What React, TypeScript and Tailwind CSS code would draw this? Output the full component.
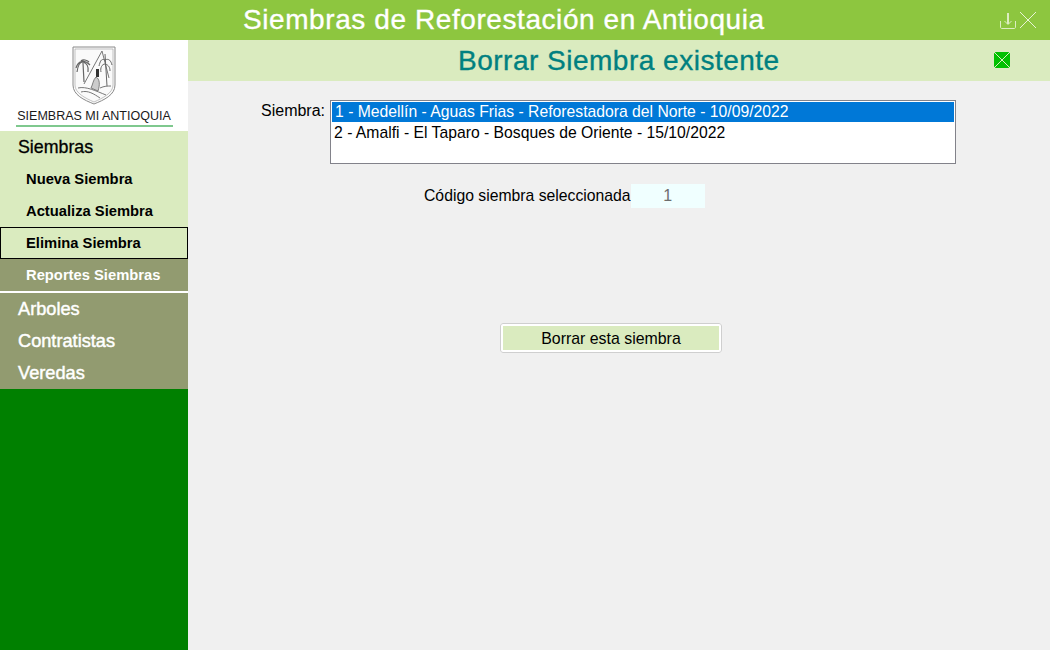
const subItems = [
  { label: "Nueva Siembra", active: false },
  { label: "Actualiza Siembra", active: false },
  { label: "Elimina Siembra", active: true },
]

const otherMenus = ["Arboles", "Contratistas", "Veredas"]

function Shield() {
  return (
    <svg width="44" height="59" viewBox="0 0 44 59" fill="none">
      <path d="M1 1H43V39C43 49 32 54 22 58C12 54 1 49 1 39Z" stroke="#8a8a8a" strokeWidth="1" fill="#fafafa" />
      <path d="M3 3H41V39C41 47 31 52 22 56C13 52 3 47 3 39Z" stroke="#aaa" strokeWidth="0.7" />
      <path d="M12 38L30 5L37 32" stroke="#777" strokeWidth="1" />
      <path d="M4 22C6 15 12 13 18 19M11 16C8 16 6 18 5 26M11 16C14 17 17 20 16 26M9 15C11 13 15 14 17 16M11 17L12 36" stroke="#666" strokeWidth="1.2" />
      <path d="M33 8L35 40M33 14C29 12 28 16 27 20M33 14C37 12 39 15 40 19M33 18C30 18 28 22 29 26M33 18C37 19 38 22 38 25" stroke="#666" strokeWidth="1" />
      <path d="M24 23H27V31H24Z" fill="#333" />
      <path d="M24 31C28 33 28 39 26 45L19 42C21 38 21 34 24 31Z" fill="#ccc" stroke="#666" strokeWidth="0.8" />
      <path d="M6 42C14 40 24 45 34 49M9 46C16 44 22 48 28 52M28 42C32 40 36 40 39 40" stroke="#777" strokeWidth="1" />
    </svg>
  )
}

function DownloadIcon() {
  return (
    <svg width="16" height="16" viewBox="0 0 16 16" fill="none" stroke="#dcedc1" strokeWidth="1">
      <path d="M0.5 8V14C0.5 15 1 15.5 2 15.5H14C15 15.5 15.5 15 15.5 14V8" />
      <path d="M8 0V11" strokeWidth="2" />
      <path d="M4.5 8L8 11.5L11.5 8" />
    </svg>
  )
}

function CrossIcon({ size, color }: { size: number; color: string }) {
  return (
    <svg width={size} height={size} viewBox={`0 0 ${size} ${size}`} stroke={color} strokeWidth="1" fill="none">
      <path d={`M0 0L${size} ${size}M${size} 0L0 ${size}`} />
    </svg>
  )
}

export default function App() {
  return (
    <div className="w-[1050px] h-[650px] flex flex-col overflow-hidden bg-[#f0f0f0] text-black font-['Liberation_Sans',Arial,sans-serif]">
      {/* Title bar */}
      <div className="relative h-10 shrink-0 bg-[#8dc63f] flex items-center pl-[243px]">
        <h1 className="text-[28px] font-normal text-white tracking-[0.58px] whitespace-nowrap [-webkit-text-stroke:0.35px_white]">Siembras de Reforestación en Antioquia</h1>
        <div className="absolute left-[1000px] top-[12px] flex items-start gap-1">
          <div className="mt-[1px]"><DownloadIcon /></div>
          <CrossIcon size={16} color="#e8f3d6" />
        </div>
      </div>

      <div className="flex flex-1 min-h-0">
        {/* Sidebar */}
        <aside className="w-[188px] shrink-0 flex flex-col bg-[#008000]">
          <div className="h-[91px] bg-white flex flex-col items-center pt-[6px]">
            <Shield />
            <div className="mt-[3px] text-[12.5px] leading-[16px] text-[#1a1a1a]">SIEMBRAS MI ANTIOQUIA</div>
            <div className="mt-[1px] w-[157px] h-[2px] bg-[#7fc88e]" />
          </div>

          <div className="bg-[#daebbf] flex flex-col text-black">
            <div className="h-8 pl-[18px] pt-[1px] flex items-center text-[17.8px] [-webkit-text-stroke:0.3px_black]">Siembras</div>
            {subItems.map((item) => (
              <div
                key={item.label}
                className={`h-8 pt-[1px] flex items-center text-[14.75px] font-bold ${item.active ? "pl-[25px] border border-black" : "pl-[26px]"}`}
              >
                {item.label}
              </div>
            ))}
          </div>

          <div className="h-8 pl-[26px] pt-[1px] flex items-center text-[14.75px] font-bold text-white bg-[#929b70]">Reportes Siembras</div>
          <div className="h-[2px] bg-white" />
          <div className="bg-[#929b70] flex flex-col text-white">
            {otherMenus.map((label) => (
              <div key={label} className="h-8 pl-[18px] pt-[1px] flex items-center text-[18.2px] [-webkit-text-stroke:0.45px_white]">
                {label}
              </div>
            ))}
          </div>
        </aside>

        {/* Main */}
        <main className="flex-1 flex flex-col min-w-0">
          <div className="relative h-[41px] shrink-0 bg-[#daebbf] flex items-center pl-[270px] pt-[1px]">
            <h2 className="text-[28px] font-normal text-[#008080] tracking-[0.5px] whitespace-nowrap [-webkit-text-stroke:0.35px_#008080]">Borrar Siembra existente</h2>
            <div className="absolute left-[806px] top-[12px] w-4 h-4 rounded-[2px] bg-[#00c000]">
              <CrossIcon size={16} color="#daebbf" />
            </div>
          </div>

          <div className="flex pt-[19px] pl-[73px]">
            <label className="text-[16px] leading-[20px] pr-[5px] pt-[1px]">Siembra:</label>
            <div className="w-[626px] h-[64px] border border-[#82828a] bg-white p-[1px] text-[15.72px] leading-[20px]">
              <div className="h-5 pl-[3px] bg-[#0078d7] text-white">1 - Medellín - Aguas Frias - Reforestadora del Norte - 10/09/2022</div>
              <div className="h-5 pl-[2px] pt-[1px]">2 - Amalfi - El Taparo - Bosques de Oriente - 15/10/2022</div>
            </div>
          </div>

          <div className="flex items-center mt-[20px] ml-[236px]">
            <span className="text-[15.75px] leading-[24px]">Código siembra seleccionada</span>
            <div className="w-[74px] h-[24px] bg-[#f0ffff] text-center text-[16px] leading-[24px] text-[#6d6d6d]">1</div>
          </div>

          <button className="self-start mt-[115px] ml-[312px] w-[222px] h-[30px] pt-[1px] border-[3px] border-white rounded-[3px] outline outline-[#cfcfcf] -outline-offset-1 bg-[#daebbf] text-[15.9px]">
            Borrar esta siembra
          </button>
        </main>
      </div>
    </div>
  )
}
